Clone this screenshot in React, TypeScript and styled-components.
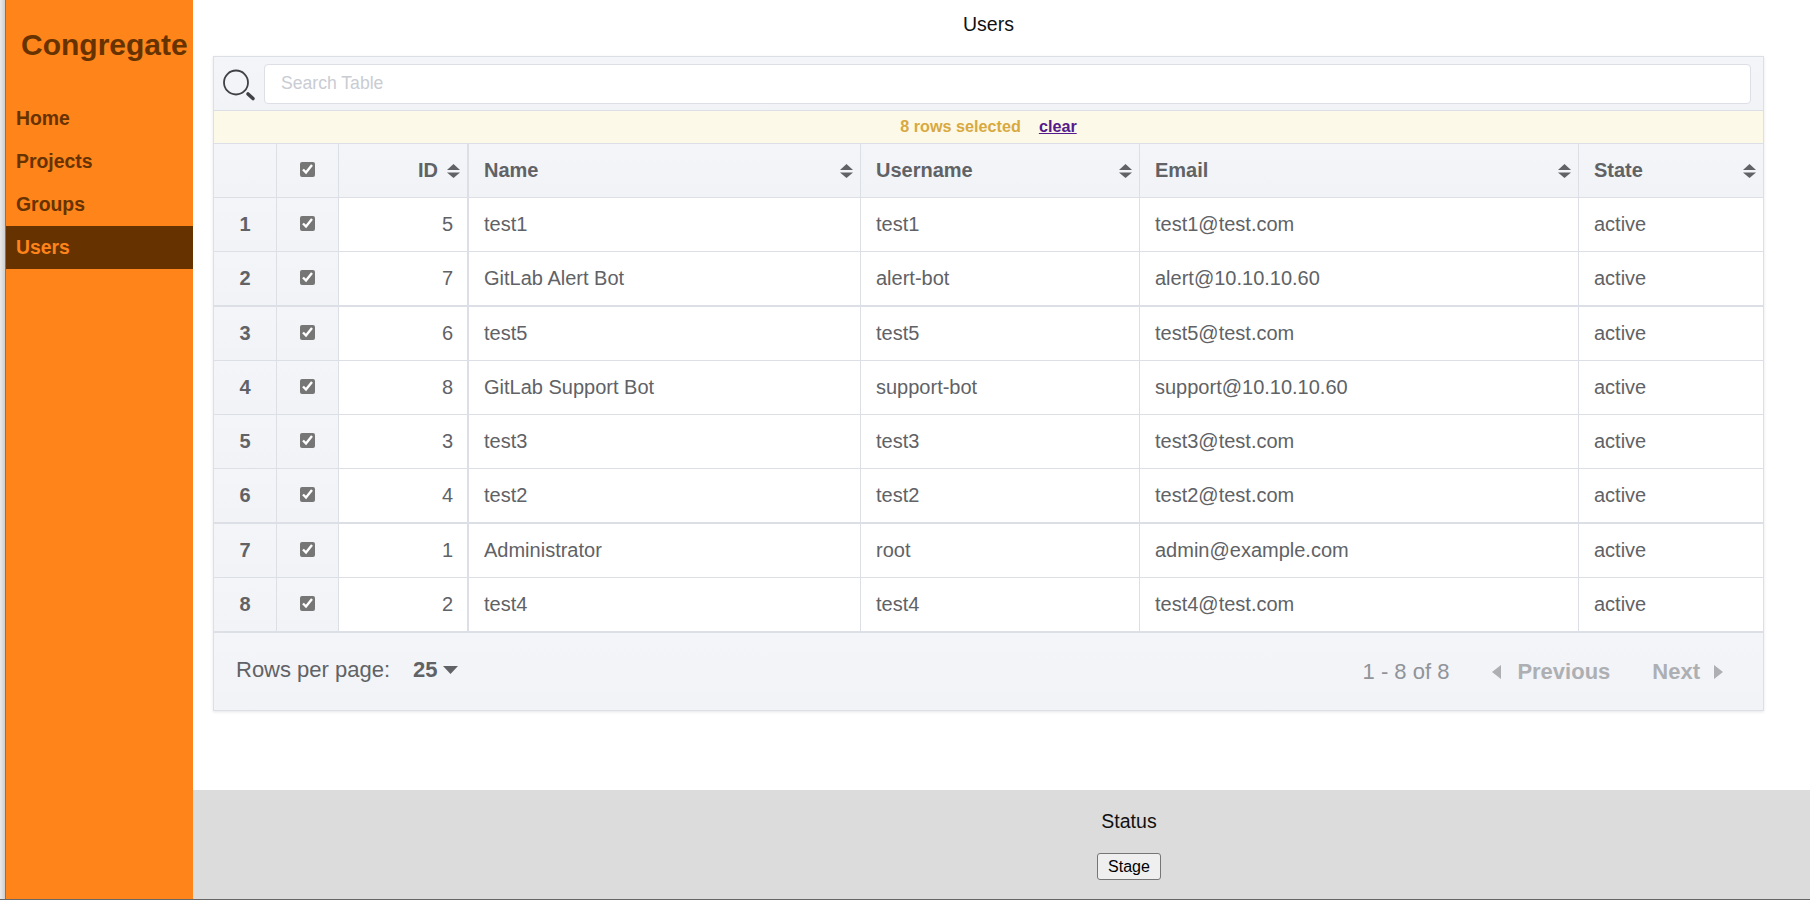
import React from 'react';
import styled, { createGlobalStyle } from 'styled-components';

const Global = createGlobalStyle`
  html, body { margin: 0; padding: 0; background: #fff; }
  body { font-family: "Liberation Sans", Arial, sans-serif; color: #111; }
  * { box-sizing: border-box; }
`;

const Page = styled.div`
  display: flex;
  width: 1810px;
  height: 900px;
  border-bottom: 1px solid #666;
  overflow: hidden;
`;
const WindowEdge = styled.div`
  flex: 0 0 6px;
  background: linear-gradient(to right, #eaeaea, #cfcfcf);
  border-right: 1px solid #767676;
`;
const Sidebar = styled.aside`
  flex: 0 0 187px;
  background: #ff8419;
  display: flex;
  flex-direction: column;
`;
const Brand = styled.div`
  height: 97px;
  padding: 30px 0 0 15px;
  font-size: 30px;
  line-height: 30px;
  font-weight: bold;
  color: #663300;
  white-space: nowrap;
`;
const NavItem = styled.a<{ $active?: boolean }>`
  display: block;
  height: 43px;
  line-height: 42px;
  padding-left: 10px;
  font-size: 19.4px;
  font-weight: bold;
  color: ${p => (p.$active ? '#ff8419' : '#663300')};
  background: ${p => (p.$active ? '#663300' : 'transparent')};
`;
const Main = styled.main`
  flex: 1;
  display: flex;
  flex-direction: column;
  min-width: 0;
`;
const Content = styled.div`
  flex: 1;
  padding: 0 46px 0 20px;
`;
const Title = styled.h1`
  margin: 0 0 7px;
  height: 49px;
  line-height: 49px;
  text-align: center;
  font-size: 19.5px;
  font-weight: normal;
`;
const Card = styled.section`
  width: 1551px;
  border: 1px solid #dcdfe6;
  box-shadow: 0 1px 3px rgba(0, 0, 0, 0.1);
  color: #606266;
`;
const SearchRow = styled.div`
  height: 54px;
  display: flex;
  align-items: center;
  padding: 0 12px 0 9px;
  gap: 8px;
  background: linear-gradient(#f4f5f8, #f1f3f6);
  border-bottom: 1px solid #dcdfe6;
`;
const SearchIcon = styled.svg`
  flex: 0 0 33px;
  width: 33px;
  height: 33px;
  margin-top: 3px;
`;
const SearchInput = styled.input`
  flex: 1;
  height: 40px;
  margin-top: 1px;
  padding: 0 16px 2px;
  border: 1px solid #dcdfe6;
  border-radius: 4px;
  background: #fff;
  font: 17.6px "Liberation Sans", Arial, sans-serif;
  color: #606266;
  outline: none;
  &::placeholder { color: #c9ccd3; opacity: 1; }
`;
const SelectionBar = styled.div`
  height: 33px;
  display: flex;
  align-items: center;
  justify-content: center;
  gap: 18px;
  padding-bottom: 1px;
  background: #fdf9e8;
  border-bottom: 1px solid #dcdfe6;
  font-size: 16.2px;
  font-weight: bold;
  color: #d8a93f;
`;
const ClearLink = styled.a`
  color: #551a8b;
  text-decoration: underline;
`;
const Table = styled.table`
  width: 1549px;
  table-layout: fixed;
  border-collapse: separate;
  border-spacing: 0;
  font-size: 20px;
`;
const HeadCell = styled.th<{ $thick?: boolean }>`
  height: 54px;
  padding: 0 7px 0 14px;
  background: linear-gradient(#f4f5f8, #f1f3f6);
  border-bottom: 1px solid #dcdfe6;
  border-right: ${p => (p.$thick ? '2px' : '1px')} solid #dcdfe6;
  font-weight: bold;
  text-align: left;
  &:nth-child(n + 4) { padding-left: 15px; }
  &:last-child { border-right: 0; }
`;
const HeadInner = styled.div<{ $end?: boolean }>`
  display: flex;
  align-items: center;
  justify-content: ${p => (p.$end ? 'flex-end' : 'space-between')};
  gap: 9px;
`;
const BodyCell = styled.td<{ $tall?: boolean; $thick?: boolean; $right?: boolean }>`
  height: ${p => (p.$tall ? '55px' : '54px')};
  padding: 0 14px;
  background: #fff;
  border-bottom: ${p => (p.$tall ? '2px' : '1px')} solid #dcdfe6;
  border-right: ${p => (p.$thick ? '2px' : '1px')} solid #dcdfe6;
  text-align: ${p => (p.$right ? 'right' : 'left')};
  white-space: nowrap;
  &:nth-child(n + 4) { padding-left: 15px; }
  &:last-child { border-right: 0; }
`;
const IndexCell = styled.th<{ $tall?: boolean }>`
  height: ${p => (p.$tall ? '55px' : '54px')};
  padding: 0;
  background: linear-gradient(#f4f5f8, #f1f3f6);
  border-bottom: ${p => (p.$tall ? '2px' : '1px')} solid #dcdfe6;
  border-right: 1px solid #dcdfe6;
  font-weight: bold;
  text-align: center;
`;
const HeadCheckCell = styled.th`
  height: 54px;
  padding: 0;
  background: linear-gradient(#f4f5f8, #f1f3f6);
  border-bottom: 1px solid #dcdfe6;
  border-right: 1px solid #dcdfe6;
  text-align: center;
`;
const Check = styled.input.attrs({ type: 'checkbox' })`
  display: block;
  width: 15px;
  height: 15px;
  margin: -2px auto 0;
  accent-color: #767676;
`;
const Pager = styled.div`
  height: 77px;
  display: flex;
  align-items: center;
  justify-content: space-between;
  padding: 0 40px 0 22px;
  background: linear-gradient(#f4f5f8, #f1f3f6);
  font-size: 22px;
`;
const PerPage = styled.div`
  display: flex;
  align-items: center;
  margin-top: -3px;
`;
const PerPageValue = styled.b`
  margin-left: 23px;
  margin-right: 5px;
`;
const PageControls = styled.div`
  display: flex;
  align-items: center;
  font-weight: bold;
  color: #adafb3;
`;
const Count = styled.span`
  margin-right: 43px;
  font-weight: normal;
  color: #909399;
`;
const PageButton = styled.span<{ $next?: boolean }>`
  display: flex;
  align-items: center;
  gap: ${p => (p.$next ? '14px' : '16px')};
  margin-left: ${p => (p.$next ? '42px' : '0')};
`;
const Icon = styled.svg`
  display: block;
  flex: none;
`;
const StatusBar = styled.footer`
  flex: 0 0 109px;
  padding: 20px 0 0 255px;
  background: #dcdcdc;
  text-align: center;
`;
const StatusLabel = styled.div`
  height: 22px;
  line-height: 22px;
  font-size: 19.5px;
  margin-bottom: 21px;
`;
const StageButton = styled.button`
  width: 64px;
  height: 27px;
  padding: 0;
  background: #efefef;
  border: 1px solid #767676;
  border-radius: 3px;
  color: #000;
  font: 16px "Liberation Sans", Arial, sans-serif;
`;

const SortArrows = () => (
  <Icon width="13" height="14" viewBox="0 0 13 14" fill="#606266">
    <path d="M6.5 0 L13 6 H0 Z" />
    <path d="M0 8.5 H13 L6.5 14 Z" />
  </Icon>
);

const columns = ['Name', 'Username', 'Email', 'State'];
const rows = [
  { id: 5, name: 'test1', user: 'test1', email: 'test1@test.com' },
  { id: 7, name: 'GitLab Alert Bot', user: 'alert-bot', email: 'alert@10.10.10.60', tall: true },
  { id: 6, name: 'test5', user: 'test5', email: 'test5@test.com' },
  { id: 8, name: 'GitLab Support Bot', user: 'support-bot', email: 'support@10.10.10.60' },
  { id: 3, name: 'test3', user: 'test3', email: 'test3@test.com' },
  { id: 4, name: 'test2', user: 'test2', email: 'test2@test.com', tall: true },
  { id: 1, name: 'Administrator', user: 'root', email: 'admin@example.com' },
  { id: 2, name: 'test4', user: 'test4', email: 'test4@test.com', tall: true },
];
const widths = [63, 62, 130, 392, 279, 439, 184];
const nav = ['Home', 'Projects', 'Groups', 'Users'];

export default function App() {
  return (
    <Page>
      <Global />
      <WindowEdge />
      <Sidebar>
        <Brand>Congregate</Brand>
        {nav.map(n => (
          <NavItem key={n} $active={n === 'Users'}>{n}</NavItem>
        ))}
      </Sidebar>
      <Main>
        <Content>
          <Title>Users</Title>
          <Card>
            <SearchRow>
              <SearchIcon viewBox="0 0 33 33" fill="none">
                <circle cx="13" cy="13.5" r="12" stroke="#3f4146" strokeWidth="1.8" />
                <path d="M25 25 L30 29.5" stroke="#3f4146" strokeWidth="3.6" strokeLinecap="round" />
              </SearchIcon>
              <SearchInput placeholder="Search Table" readOnly />
            </SearchRow>
            <SelectionBar>
              <span>8 rows selected</span>
              <ClearLink href="#">clear</ClearLink>
            </SelectionBar>
            <Table>
              <colgroup>
                {widths.map((w, i) => (
                  <col key={i} width={w} />
                ))}
              </colgroup>
              <thead>
                <tr>
                  <IndexCell />
                  <HeadCheckCell><Check checked readOnly /></HeadCheckCell>
                  <HeadCell $thick>
                    <HeadInner $end>ID <SortArrows /></HeadInner>
                  </HeadCell>
                  {columns.map(c => (
                    <HeadCell key={c}>
                      <HeadInner>{c} <SortArrows /></HeadInner>
                    </HeadCell>
                  ))}
                </tr>
              </thead>
              <tbody>
                {rows.map((r, i) => (
                  <tr key={r.id}>
                    <IndexCell $tall={r.tall}>{i + 1}</IndexCell>
                    <IndexCell $tall={r.tall}><Check checked readOnly /></IndexCell>
                    <BodyCell $tall={r.tall} $thick $right>{r.id}</BodyCell>
                    <BodyCell $tall={r.tall}>{r.name}</BodyCell>
                    <BodyCell $tall={r.tall}>{r.user}</BodyCell>
                    <BodyCell $tall={r.tall}>{r.email}</BodyCell>
                    <BodyCell $tall={r.tall}>active</BodyCell>
                  </tr>
                ))}
              </tbody>
            </Table>
            <Pager>
              <PerPage>
                Rows per page:
                <PerPageValue>25</PerPageValue>
                <Icon width="15" height="8" viewBox="0 0 15 8" fill="#606266">
                  <path d="M0 0 H15 L7.5 8 Z" />
                </Icon>
              </PerPage>
              <PageControls>
                <Count>1 - 8 of 8</Count>
                <PageButton>
                  <Icon width="9" height="14" viewBox="0 0 9 14" fill="#adafb3">
                    <path d="M9 0 V14 L0 7 Z" />
                  </Icon>
                  Previous
                </PageButton>
                <PageButton $next>
                  Next
                  <Icon width="9" height="14" viewBox="0 0 9 14" fill="#adafb3">
                    <path d="M0 0 V14 L9 7 Z" />
                  </Icon>
                </PageButton>
              </PageControls>
            </Pager>
          </Card>
        </Content>
        <StatusBar>
          <StatusLabel>Status</StatusLabel>
          <StageButton>Stage</StageButton>
        </StatusBar>
      </Main>
    </Page>
  );
}
